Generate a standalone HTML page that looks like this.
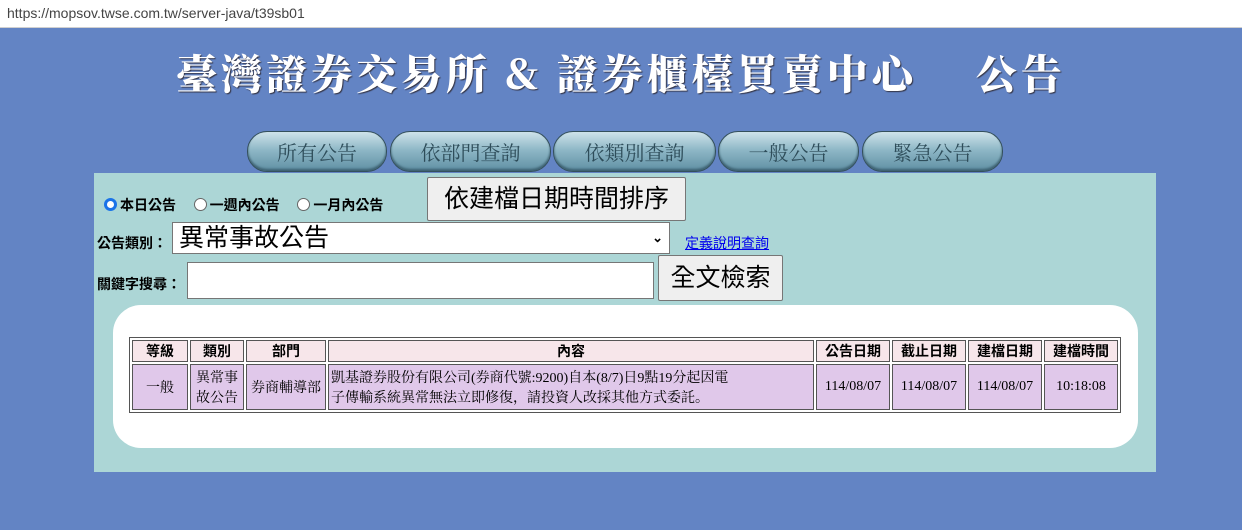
<!DOCTYPE html>
<html><head><meta charset="utf-8"><style>
body{margin:0;width:1242px;height:530px;background:#6384c4;position:relative;overflow:hidden;font-family:"Liberation Sans","Noto Sans CJK TC",sans-serif}
.a{position:absolute}
.url{left:0;top:0;width:1242px;height:27px;background:#fff;border-bottom:1px solid #d0d0d0;font-size:14px;color:#444;line-height:26px;text-indent:7px}
.title{left:0;top:46px;width:1242px;text-align:center;color:#fff;font-family:"Noto Serif CJK SC",serif;font-weight:900;font-size:41px;letter-spacing:4px;white-space:pre;line-height:52px;text-shadow:1px 1px 1px #334}
.tab{top:131px;height:41px;border-radius:20px/20px;background:linear-gradient(#cfe3ea,#8fb8c7 45%,#5f8fa3);border:1px solid #34505c;box-shadow:inset 0 -2px 2px #3c6070;font-family:"Noto Serif CJK SC",serif;font-size:20px;color:#2e4d5a;text-align:center;line-height:40px;box-sizing:border-box}
.panel{left:94px;top:173px;width:1062px;height:299px;background:#acd6d6}
.lab{font-size:14px;font-weight:bold;color:#000}
.btn{background:#efefef;border:1px solid #767676;border-radius:2px;font-size:25px;text-align:center;box-sizing:border-box}
.box{left:113px;top:305px;width:1025px;height:143px;background:#fff;border-radius:28px}
table{position:absolute;left:129px;top:337px;width:992px;border-collapse:separate;border-spacing:2px;border:1px solid #555;font-size:14px;font-family:"Liberation Serif","Noto Serif CJK SC",serif}
td{border:1px solid #555;text-align:center;padding:0 2px}
tr.h td{background:#f7e6ea;font-weight:bold;height:20px;font-family:"Liberation Sans","Noto Sans CJK TC",sans-serif}
tr.d td{background:#e0c8ea;height:44px}
.radio{display:inline-block;width:13px;height:13px;border:1px solid #666;border-radius:50%;background:#fff;vertical-align:-1px;margin-right:3px;box-sizing:border-box}
</style></head><body>
<div class="a url">https://mopsov.twse.com.tw/server-java/t39sb01</div>
<div class="a title">臺灣證券交易所 &amp; 證券櫃檯買賣中心　 公告</div>
<div class="a tab" style="left:247px;width:140px">所有公告</div>
<div class="a tab" style="left:390px;width:161px">依部門查詢</div>
<div class="a tab" style="left:553px;width:163px">依類別查詢</div>
<div class="a tab" style="left:718px;width:141px">一般公告</div>
<div class="a tab" style="left:862px;width:141px">緊急公告</div>
<div class="a panel"></div>
<div class="a lab" style="left:104px;top:195px;word-spacing:2px"><span class="radio" style="border:3px solid #1a73e8"></span>本日公告&nbsp;&nbsp; <span class="radio"></span>一週內公告&nbsp;&nbsp; <span class="radio"></span>一月內公告</div>
<div class="a btn" style="left:427px;top:177px;width:259px;height:44px;line-height:42px">依建檔日期時間排序</div>
<div class="a lab" style="left:97px;top:233px">公告類別：</div>
<div class="a" style="left:172px;top:222px;width:498px;height:32px;background:#fff;border:1px solid #767676;box-sizing:border-box;font-size:25px;line-height:30px;padding-left:6px">異常事故公告<span style="position:absolute;right:6px;top:0;font-size:13px;font-weight:bold">&#8964;</span></div>
<div class="a" style="left:685px;top:233px;font-size:14px;color:#0000ee;text-decoration:underline">定義說明查詢</div>
<div class="a lab" style="left:97px;top:274px">關鍵字搜尋：</div>
<div class="a" style="left:187px;top:262px;width:467px;height:37px;background:#fff;border:1px solid #767676;box-sizing:border-box"></div>
<div class="a btn" style="left:658px;top:255px;width:125px;height:46px;line-height:44px">全文檢索</div>
<div class="a box"></div>
<table>
<tr class="h"><td style="width:50px">等級</td><td style="width:48px">類別</td><td style="width:74px">部門</td><td>內容</td><td style="width:68px">公告日期</td><td style="width:68px">截止日期</td><td style="width:68px">建檔日期</td><td style="width:68px">建檔時間</td></tr>
<tr class="d"><td>一般</td><td>異常事<br>故公告</td><td style="padding:0">券商輔導部</td><td style="text-align:left;padding-right:80px">凱基證券股份有限公司(券商代號:9200)自本(8/7)日9點19分起因電子傳輸系統異常無法立即修復，請投資人改採其他方式委託。</td><td>114/08/07</td><td>114/08/07</td><td>114/08/07</td><td>10:18:08</td></tr>
</table>
</body></html>
